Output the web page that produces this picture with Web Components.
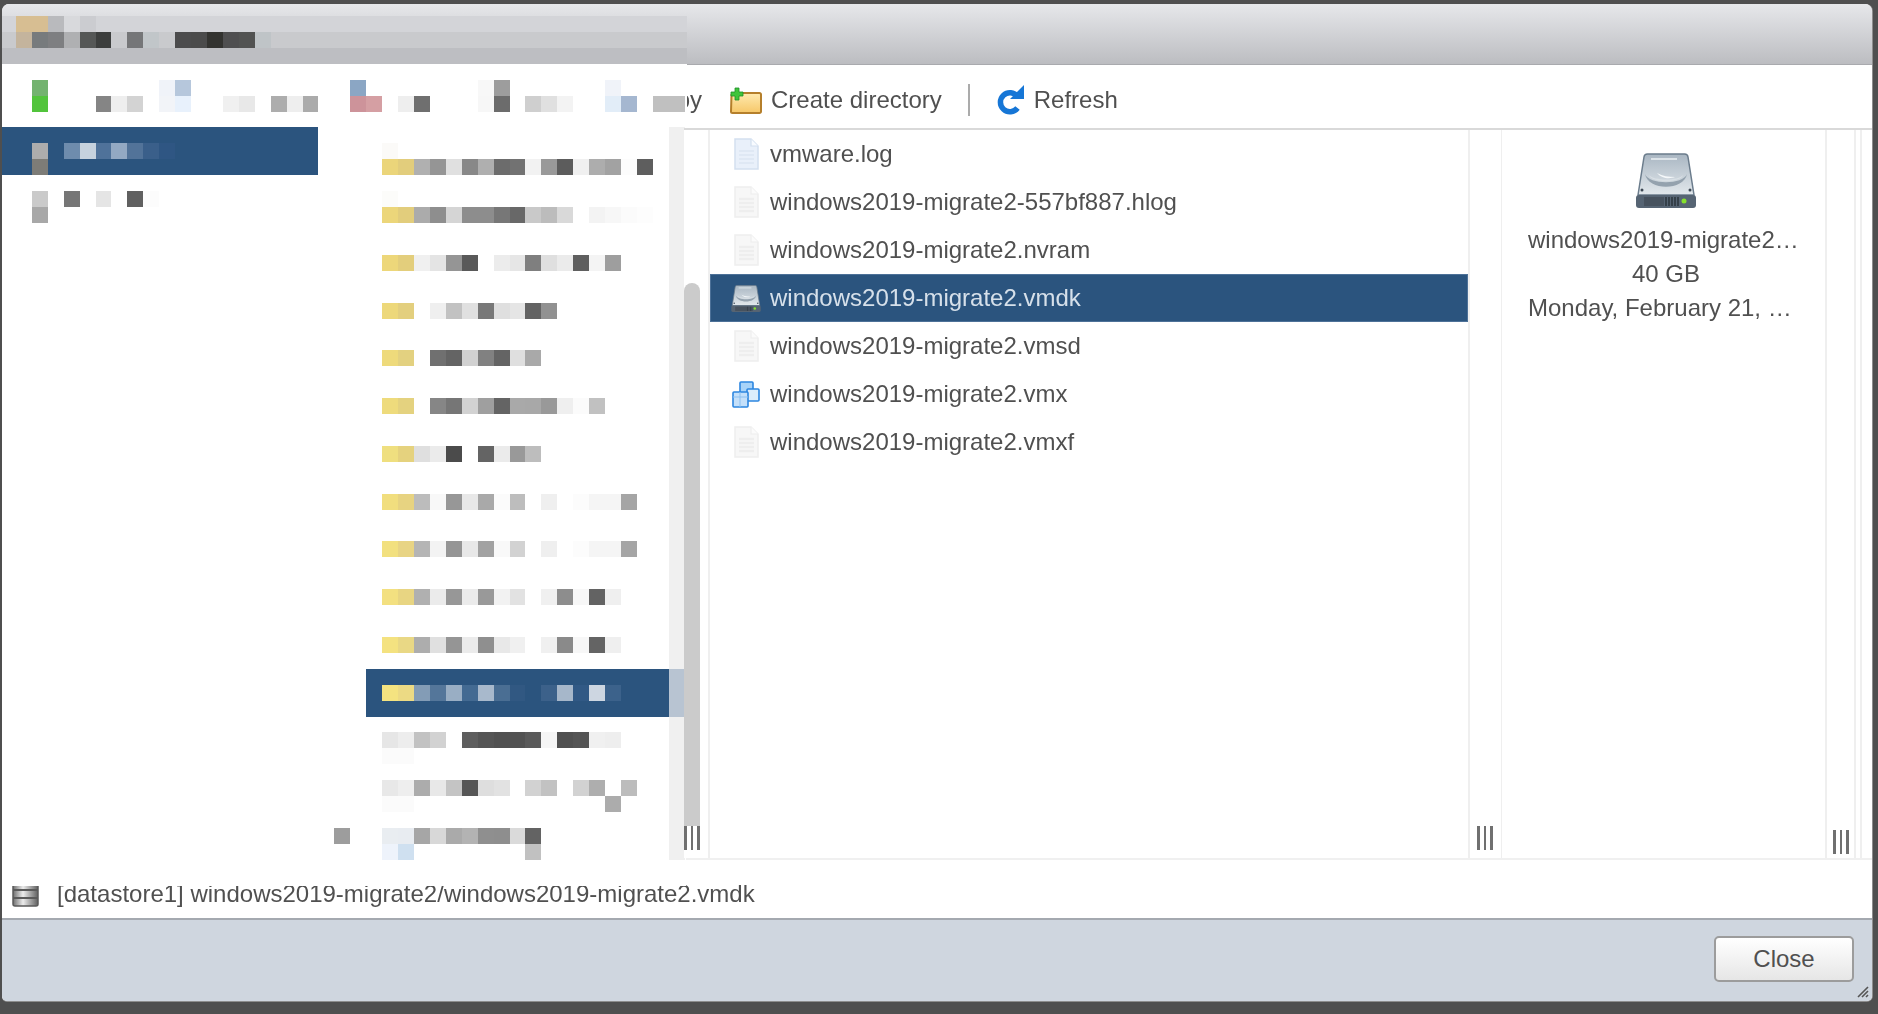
<!DOCTYPE html>
<html>
<head>
<meta charset="utf-8">
<title>Datastore browser</title>
<style>
    html, body {
        margin: 0;
        height: 100%;
        overflow: hidden;
        background: #4f4f4f;
        font-family: "Liberation Sans", Arial, sans-serif;
    }
</style>
</head>
<body>
<file-dialog>
    <tool-button slot="tools"><span>Copy</span></tool-button>
    <tool-button slot="tools" gap="28"><file-icon slot="icon" type="folder"></file-icon>Create directory</tool-button>
    <tool-button slot="tools" separator><file-icon slot="icon" type="refresh"></file-icon>Refresh</tool-button>

    <file-row slot="files" type="log">vmware.log</file-row>
    <file-row slot="files" type="plain">windows2019-migrate2-557bf887.hlog</file-row>
    <file-row slot="files" type="plain">windows2019-migrate2.nvram</file-row>
    <file-row slot="files" type="disk" selected>windows2019-migrate2.vmdk</file-row>
    <file-row slot="files" type="plain">windows2019-migrate2.vmsd</file-row>
    <file-row slot="files" type="vmx">windows2019-migrate2.vmx</file-row>
    <file-row slot="files" type="plain">windows2019-migrate2.vmxf</file-row>

    <file-details slot="details">
        <span class="cut">windows2019-migrate2…</span>
        <span>40 GB</span>
        <span class="cut">Monday, February 21, …</span>
    </file-details>

    <span slot="path">[datastore1] windows2019-migrate2/windows2019-migrate2.vmdk</span>
</file-dialog>
<redacted-mosaic></redacted-mosaic>

<script>
// Icons
const diskIcon = (w, h) => `<svg width="${w}" height="${h}" viewBox="0 0 60 55"><defs><linearGradient id="bl" x1="0" y1="0" x2="0" y2="1"><stop offset="0" stop-color="#a9b6c2"/><stop offset="1" stop-color="#e2e8ec"/></linearGradient></defs><path d="M2 42 8 4a3.500 3.500 0 0 1 3.500-3h37A3.500 3.500 0 0 1 52 4l6 38z" fill="url(#bl)" stroke="#6b7c8c" stroke-width="1.500"/><path d="M9 21c3 17 39 17 42 0-4 11-38 11-42 0z" fill="#94a2ae"/><path d="M13 22c2 8 32 8 34 0-4 6-30 6-34 0z" fill="#d9e0e5"/><path d="M21 20c5 6 13 6 18 4-7 0-12-1-18-4z" fill="#f5f8fa"/><path d="M15 6h26" stroke="#dde4e9" stroke-width="2"/><circle cx="6" cy="37" r="1.500" fill="#3c4753"/><circle cx="54" cy="37" r="1.500" fill="#3c4753"/><rect y="42" width="60" height="13" rx="3" fill="#566473"/><rect x="8" y="44" width="20" height="9" fill="#47525e"/><path d="M30 44v9M33 44v9M36 44v9M39 44v9M42 44v9" stroke="#2b343d" stroke-width="1.500"/><circle cx="48" cy="48" r="2.500" fill="#84e02c"/></svg>`;

const ICONS = {
    log: `<svg width="25" height="32" viewBox="0 0 25 32"><path d="M1 1h16l7 7v23H1z" fill="#e9f0fa" stroke="#d3dfef" stroke-width="1.5"/><path d="M17 1v7h7" fill="#f8fbff" stroke="#d3dfef" stroke-width="1.2"/><path d="M5 13h15M5 17h15M5 21h15M5 25h15" stroke="#dfe8f4" stroke-width="2"/></svg>`,
    plain: `<svg width="25" height="32" viewBox="0 0 25 32"><path d="M1 1h16l7 7v23H1z" fill="#f7f7f7" stroke="#eeeeee" stroke-width="1.5"/><path d="M17 1v7h7" fill="#fbfbfb" stroke="#eeeeee" stroke-width="1.2"/><path d="M5 13h15M5 17h15M5 21h15M5 25h15" stroke="#eeeeee" stroke-width="2.5"/></svg>`,
    vmx: `<svg width="28" height="27" viewBox="0 0 28 27"><rect x="8" y="1" width="13" height="12" rx="1" fill="#a8d3f8" stroke="#2c86e0" stroke-width="1.6"/><rect x="15" y="8" width="12" height="12" rx="1" fill="#dcedfc" stroke="#2c86e0" stroke-width="1.6"/><rect x="1" y="11" width="15" height="15" rx="1" fill="#c4e0fa" stroke="#2c86e0" stroke-width="1.6"/><path d="M1 16h15M8 11v15" stroke="#8cc0f0" stroke-width="1"/></svg>`,
    folder: `<svg width="32" height="27" viewBox="0 0 32 27"><defs><linearGradient id="f" x1="0" y1="0" x2="0" y2="1"><stop offset="0" stop-color="#ffeab0"/><stop offset="1" stop-color="#f6c768"/></linearGradient></defs><path d="M1.500 8h9l2-2h17a1.500 1.500 0 0 1 1.500 1.500v17a1.500 1.500 0 0 1-1.500 1.500h-27A1.500 1.500 0 0 1 1 24.500z" fill="url(#f)" stroke="#b57f2b" stroke-width="2"/><path d="M5 1h4v4h4v4H9v4H5V9H1V5h4z" fill="#3fc43b" stroke="#1f8f2a" stroke-width=".8"/></svg>`,
    refresh: `<svg width="29" height="30" viewBox="0 0 29 30"><path d="M21.500 11.500A9.500 9.500 0 1 0 21.500 23" fill="none" stroke="#1676d6" stroke-width="5.500"/><path d="M28 0v14H14z" fill="#1676d6"/></svg>`,
    disk: diskIcon(30, 27),
    diskLarge: diskIcon(60, 55),
    datastore: `<svg width="27" height="26" viewBox="0 0 27 26"><defs><linearGradient id="s" x1="0" y1="0" x2="1" y2="0"><stop offset="0" stop-color="#6f6f6f"/><stop offset=".4" stop-color="#ececec"/><stop offset="1" stop-color="#5f5f5f"/></linearGradient></defs><rect x="1" y="1" width="25" height="24" rx="2" fill="url(#s)" stroke="#5a5a5a" stroke-width="1.500"/><path d="M1 9h25M1 17h25" stroke="#5a5a5a" stroke-width="2"/></svg>`
};

class FileIcon extends HTMLElement {
    connectedCallback() {
        this.attachShadow({mode: "open"});
        this.shadowRoot.innerHTML = `
            <style>
                :host { display: flex; align-items: center; justify-content: center; line-height: 0; }
            </style>
            ${ICONS[this.getAttribute("type")]}
        `;
    }
}
customElements.define("file-icon", FileIcon);

const toolButtonTemplate = document.createElement("template");
toolButtonTemplate.innerHTML = `
    <style>
        :host { display: flex; align-items: center; white-space: nowrap; }
        .sep { width: 2px; height: 32px; margin: 0 26px 0 26px; background: #ababab; display: none; }
        :host([separator]) .sep { display: block; }
        ::slotted([slot="icon"]) { margin-right: 9px; }
    </style>
    <div class="sep"></div>
    <slot name="icon"></slot>
    <slot></slot>
`;

class ToolButton extends HTMLElement {
    constructor() {
        super();
        this.attachShadow({mode: "open"});
        this.shadowRoot.append(toolButtonTemplate.content.cloneNode(true));
    }

    connectedCallback() {
        if (this.hasAttribute("gap")) {
            this.style.marginLeft = `${this.getAttribute("gap")}px`;
        }
    }
}
customElements.define("tool-button", ToolButton);

const fileRowTemplate = document.createElement("template");
fileRowTemplate.innerHTML = `
    <style>
        :host {
            display: flex;
            align-items: center;
            box-sizing: border-box;
            height: 48px;
            padding-left: 20px;
            white-space: nowrap;
        }
        :host([selected]) {
            background: #2b547e;
            color: #d6e0ea;
            box-shadow: inset 0 0 0 1px #4d7198;
        }
        .icon { width: 32px; margin-right: 8px; display: flex; justify-content: center; }
    </style>
    <div class="icon"></div>
    <slot></slot>
`;

class FileRow extends HTMLElement {
    constructor() {
        super();
        this.attachShadow({mode: "open"});
        this.shadowRoot.append(fileRowTemplate.content.cloneNode(true));
    }

    connectedCallback() {
        let icon = document.createElement("file-icon");
        icon.setAttribute("type", this.getAttribute("type"));
        this.shadowRoot.querySelector(".icon").append(icon);
    }
}
customElements.define("file-row", FileRow);

const fileDetailsTemplate = document.createElement("template");
fileDetailsTemplate.innerHTML = `
    <style>
        :host {
            display: flex;
            flex-direction: column;
            align-items: center;
            padding: 23px 0 0 5px;
        }
        .lines { width: 276px; margin-top: 15px; }
        ::slotted(span) {
            display: block;
            height: 34px;
            line-height: 34px;
            text-align: center;
            white-space: nowrap;
        }
        ::slotted(.cut) { text-align: left; }
    </style>
    <file-icon type="diskLarge"></file-icon>
    <div class="lines"><slot></slot></div>
`;

class FileDetails extends HTMLElement {
    constructor() {
        super();
        this.attachShadow({mode: "open"});
        this.shadowRoot.append(fileDetailsTemplate.content.cloneNode(true));
    }
}
customElements.define("file-details", FileDetails);

const paneGripTemplate = document.createElement("template");
paneGripTemplate.innerHTML = `
    <style>
        :host { display: flex; gap: 4px; width: 16px; height: 24px; }
        i { display: block; flex: 1; background: #707070; }
    </style>
    <i></i><i></i><i></i>
`;

class PaneGrip extends HTMLElement {
    constructor() {
        super();
        this.attachShadow({mode: "open"});
        this.shadowRoot.append(paneGripTemplate.content.cloneNode(true));
    }
}
customElements.define("pane-grip", PaneGrip);

const dialogTemplate = document.createElement("template");
dialogTemplate.innerHTML = `
    <style>
        :host {
            display: flex;
            flex-direction: column;
            box-sizing: border-box;
            width: 1870px;
            height: 997px;
            margin: 4px 0 0 2px;
            overflow: hidden;
            border-radius: 7px 7px 5px 5px;
            background: #fff;
            color: #505050;
            font-size: 24px;
            box-shadow: 1px 0 0 #8d8d8d, 0 1px 0 #8d8d8d;
            filter: blur(0.45px);
        }
        .title {
            height: 60px;
            flex: none;
            border-bottom: 1px solid #a9aaae;
            background: linear-gradient(#e6e7ea, #bcbdc1);
        }
        .toolbar {
            height: 63px;
            flex: none;
            box-sizing: border-box;
            padding: 7px 0 0 644px;
            display: flex;
            align-items: center;
        }
        .rule { height: 2px; flex: none; background: #d9d9d9; }
        .panes { flex: 1; display: flex; min-height: 0; }
        .tree {
            width: 708px;
            flex: none;
            box-sizing: border-box;
            padding-right: 8px;
            border-right: 2px solid #efefef;
            display: flex;
            justify-content: flex-end;
        }
        .scroll { width: 16px; display: flex; flex-direction: column; }
        .thumb { height: 543px; margin-top: 153px; border-radius: 8px 8px 0 0; background: #cbcbcb; }
        .list { width: 758px; flex: none; box-sizing: border-box; }
        .split {
            flex: none;
            display: flex;
            align-items: flex-end;
            box-sizing: border-box;
        }
        .s1 { width: 34px; padding: 0 0 8px 7px; border-left: 2px solid #efefef; border-right: 1px solid #efefef; }
        .details { width: 323px; flex: none; }
        .s2 { width: 31px; padding: 0 0 4px 6px; border-left: 2px solid #efefef; border-right: 2px solid #efefef; }
        .tail { width: 4px; flex: none; border-right: 2px solid #efefef; }
        .pane-end { height: 2px; flex: none; background: #f0f0f0; }
        .path {
            height: 58px;
            flex: none;
            box-sizing: border-box;
            padding: 10px 0 0 10px;
            display: flex;
            align-items: center;
            gap: 18px;
            white-space: nowrap;
        }
        .footer {
            height: 83px;
            flex: none;
            display: flex;
            justify-content: flex-end;
            align-items: flex-start;
            box-sizing: border-box;
            padding: 16px 18px 0 0;
            border-top: 2px solid #a4a9b0;
            background: #cfd6df;
            position: relative;
        }
        button {
            width: 140px;
            height: 46px;
            box-sizing: border-box;
            border: 2px solid #9c9c9c;
            border-radius: 5px;
            background: linear-gradient(#ffffff, #e6e6e6);
            color: #505050;
            font: inherit;
            padding: 0;
        }
        .resize { position: absolute; right: 3px; bottom: 3px; }
    </style>
    <div class="title"></div>
    <div class="toolbar"><slot name="tools"></slot></div>
    <div class="rule"></div>
    <div class="panes">
        <div class="tree">
            <div class="scroll">
                <div class="thumb"></div>
                <pane-grip></pane-grip>
            </div>
        </div>
        <div class="list"><slot name="files"></slot></div>
        <div class="split s1"><pane-grip></pane-grip></div>
        <div class="details"><slot name="details"></slot></div>
        <div class="split s2"><pane-grip></pane-grip></div>
        <div class="tail"></div>
    </div>
    <div class="pane-end"></div>
    <div class="path">
        <file-icon type="datastore"></file-icon>
        <slot name="path"></slot>
    </div>
    <div class="footer">
        <button>Close</button>
        <svg class="resize" width="12" height="12" viewBox="0 0 12 12"><path d="M11 1 1 11M11 5l-6 6M11 9l-2 2" stroke="#555" stroke-width="1.600"/></svg>
    </div>
`;

class FileDialog extends HTMLElement {
    constructor() {
        super();
        this.attachShadow({mode: "open"});
        this.shadowRoot.append(dialogTemplate.content.cloneNode(true));
    }
}
customElements.define("file-dialog", FileDialog);

// Pixelated block covering the left of the window: [row, first col, colours]. "-" leaves a cell empty
const MOSAIC_CELLS = [
    [1, 1, "d7be92 d7be92 b9babd d8d9dc cbccd0"],
    [2, 1, "c4b49d 777b7d 7e7f81 afb0b2 555756 3c3e3d - 757678 c1c6c9 - 4c4c4d 4b4b4b 333330 4f4f50 525352 bfc4c7"],
    [5, 2, "73b36f"], [5, 10, "f0f3f9 b6c7dc"], [5, 22, "8ba6c4"], [5, 30, "f8f8f8 9d9d9d"], [5, 38, "f0f3f9"],
    [6, 2, "52c43c"], [6, 6, "858585 eeeeee d3d3d3 - f2f4f8 e8f1fc"], [6, 14, "f0f0f0 e8e8e8 - adadad eeeeee ababab"],
    [6, 22, "cd939a d59fa3 - eeeeee 6f6f6f"], [6, 30, "f7f7f7 6c6c6c - cfcfcf e0e0e0 f3f3f3"], [6, 38, "e2edf8 a5b7d0 - c0c0c0 c0c0c0"],
    [9, 2, "adadad - 6e8cad c6d2de 4f729a 93a9c3 527399 3a5f8a 2f5683"],
    [10, 2, "7d7c77"],
    [12, 2, "cacaca - 767676 - e5e5e5 - 606060 fcfcfc"],
    [13, 2, "a8a8a8"],
    [9, 24, "fbfaf8"],
    [10, 24, "ebd57a e2cd7c b0b0b0 959595 e0e0e0 888888 afafaf 6c6c6c 727272 f2f2f2 999999 5c5c5c f0f0f0 adadad a2a2a2 fcfcfc 5e5e5e"],
    [12, 24, "fcfcfa"],
    [13, 24, "ecd67a e2cd7c ababab 8e8e8e d5d5d5 8d8d8d 8d8d8d 777777 686868 c9c9c9 bcbcbc d9d9d9 - f3f3f3 f7f7f7 fbfbfb fdfdfd"],
    [16, 24, "edd77a e3ce7c f0f0f0 e4e4e4 959595 595959 - ececec e6e6e6 7f7f7f dfdfdf ebebeb 5f5f5f f4f4f4 9e9e9e"],
    [19, 24, "edd87a e3cf7e - efefef c2c2c2 e0e0e0 787878 dfdfdf e5e5e5 636363 919191"],
    [22, 24, "eeda7b e3d180 - 707070 646464 d1d1d1 818181 646464 dfdfdf a9a9a9"],
    [25, 24, "eedb7c e4d27f - 868686 767676 d2d2d2 9f9f9f 646464 a9a9a9 a8a8a8 999999 efefef fbfbfb c1c1c1"],
    [28, 24, "efdf7f e5d27e dfdfdf ebebeb 4b4b4b - 646464 ebebeb 999999 bdbdbd"],
    [31, 24, "f1de7e e7d381 bcbcbc f8f8f8 979797 e8e8e8 a9a9a9 fbfbfb bdbdbd - efefef - fcfcfc f5f5f5 f5f5f5 a5a5a5"],
    [34, 24, "f2e07f e8d484 b5b5b5 f3f3f3 959595 e8e8e8 a2a2a2 f9f9f9 d2d2d2 - efefef - fcfcfc f5f5f5 f5f5f5 a5a5a5"],
    [37, 24, "f3e080 e8d582 b0b0b0 ebebeb 979797 ebebeb 999999 f2f2f2 e2e2e2 - f0f0f0 8d8d8d f7f7f7 636363 efefef"],
    [40, 24, "f4e280 e9d885 adadad e0e0e0 959595 ebebeb 8f8f8f e8e8e8 f0f0f0 - f0f0f0 8a8a8a f7f7f7 646464 efefef"],
    [43, 24, "f4e380 ecda84 839cb6 54769a 99aec4 436a92 a8b9cc 4a6e93 315882 - 3c618a a6b7ca 315985 cdd6e1 3c628b"],
    [46, 24, "e6e6e6 ededed c2c2c2 d2d2d2 - 5e5e5e 555555 515151 525252 5a5a5a f5f5f5 505050 545454 f0f0f0 eeeeee"],
    [47, 24, "fbfbfb fbfbfb"],
    [49, 24, "e8e8e8 eeeeee acacac e8e8e8 c4c4c4 565656 dedede e2e2e2 - d2d2d2 c2c2c2 - d2d2d2 aeaeae - bcbcbc"],
    [50, 24, "fbfbfb fbfbfb"], [50, 38, "acacac"],
    [52, 21, "9d9d9d"],
    [52, 24, "e9edf1 e8ecf1 a6a6a6 d8d8d8 aaaaaa b3b3b3 8f8f8f 8e8e8e dadada 636363"],
    [53, 24, "eef3fb cfe0f0"], [53, 33, "c1c1c1"]
];

// Plain bands behind the cells: [first row, row span, first col, col span, colour]
const MOSAIC_BANDS = [
    [1, 1, 0, 44, "#d3d4d8"],
    [2, 1, 0, 44, "#c9cacd"],
    [3, 1, 0, 44, "#bdbec2"],
    [8, 3, 0, 20, "#2b547e"],
    [42, 3, 23, 19, "#2b547e"],
    [8, 34, 42, 1, "#f0f0f0"],
    [42, 3, 42, 1, "#b8c4d2"],
    [45, 9, 42, 1, "#f0f0f0"]
];

const mosaicTemplate = document.createElement("template");
mosaicTemplate.innerHTML = `
    <style>
        :host {
            position: absolute;
            left: 2px;
            top: 16px;
            width: 700px;
            height: 870px;
            background: #fff;
            /* toolbar rows run 3px further right than the tree, the last rows 2px */
            clip-path: polygon(0 0, 685px 0, 685px 112px, 682px 112px, 682px 842px, 684px 842px, 684px 870px, 0 870px);
        }
        .grid {
            display: grid;
            grid-template-columns: 13.93px repeat(43, 15.93px);
            grid-template-rows: repeat(54, 15.93px);
        }
    </style>
    <div class="grid"></div>
`;

class RedactedMosaic extends HTMLElement {
    constructor() {
        super();
        this.attachShadow({mode: "open"});
        this.shadowRoot.append(mosaicTemplate.content.cloneNode(true));
        this.grid = this.shadowRoot.querySelector(".grid");
    }

    // row 1 of the data is the first grid row, col 0 the narrow first column
    addBlock(row, rowSpan, col, colSpan, color) {
        let block = document.createElement("div");
        block.style.gridRow = `${row} / span ${rowSpan}`;
        block.style.gridColumn = `${col + 1} / span ${colSpan}`;
        block.style.background = color;
        this.grid.append(block);
    }

    connectedCallback() {
        MOSAIC_BANDS.forEach(([row, rows, col, cols, color]) => {
            this.addBlock(row, rows, col, cols, color);
        });
        MOSAIC_CELLS.forEach(([row, col, colors]) => {
            colors.split(" ").forEach((color, ind) => {
                if (color !== "-") {
                    this.addBlock(row, 1, col + ind, 1, `#${color}`);
                }
            });
        });
    }
}
customElements.define("redacted-mosaic", RedactedMosaic);
</script>
</body>
</html>
